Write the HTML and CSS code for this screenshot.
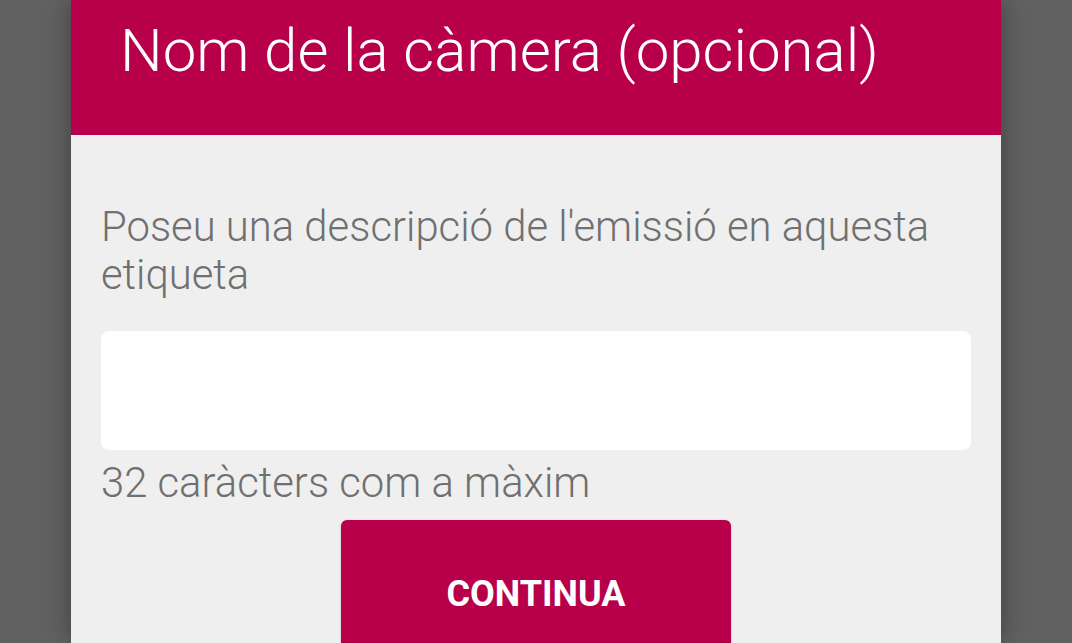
FILE: index.html
```html
<!DOCTYPE html>
<html lang="ca">
<head>
<meta charset="utf-8">
<title>Nom de la càmera</title>
<link rel="stylesheet" href="styles.css">
</head>
<body>
<div class="screen">
  <div class="dialog">
    <div class="header">
      <h1 class="title">Nom de la càmera (opcional)</h1>
    </div>
    <div class="content">
      <p class="desc">Poseu una descripció de l'emissió en aquesta etiqueta</p>
      <div class="input"></div>
      <p class="helper">32 caràcters com a màxim</p>
      <div class="actions">
        <button class="btn">CONTINUA</button>
      </div>
    </div>
  </div>
</div>
</body>
</html>
```
FILE: styles.css
```css
html, body {
  margin: 0;
  padding: 0;
  height: 100%;
  overflow: hidden;
}
body {
  background: #616161;
  font-family: Roboto, "Noto Sans", sans-serif;
}
.screen {
  display: flex;
  justify-content: center;
  height: 643px;
  padding-left: 1px;
}
.dialog {
  width: 930px;
  margin-left: -1px;
  background: #efefef;
  box-shadow: 0 0 24px rgba(0,0,0,0.35);
  display: flex;
  flex-direction: column;
}
.header {
  flex-shrink: 0;
  background: #b8004a;
  height: 135px;
  padding: 16px 0 0 49px;
  box-sizing: border-box;
}
.title {
  margin: 0;
  color: #ffffff;
  font-weight: 300;
  font-size: 60px;
  line-height: 70px;
}
.content {
  flex-shrink: 0;
  padding: 0 30px;
}
.desc {
  margin: 68px 0 0;
  color: #707070;
  font-size: 41.8px;
  line-height: 48px;
  font-weight: 300;
}
.input {
  margin-top: 32px;
  height: 119px;
  background: #ffffff;
  border-radius: 8px;
}
.helper {
  margin: 9px 0 0;
  color: #707070;
  font-size: 41.8px;
  line-height: 48px;
  font-weight: 300;
}
.actions {
  display: flex;
  justify-content: center;
  margin-top: 13px;
}
.btn {
  width: 390px;
  height: 150px;
  background: #b8004a;
  border: none;
  border-radius: 6px;
  color: #ffffff;
  font-family: Roboto, sans-serif;
  font-weight: 700;
  font-size: 36px;
  line-height: 42px;
  padding: 53px 0 0;
  display: flex;
  justify-content: center;
  align-items: flex-start;
  box-shadow: 0 1px 3px rgba(0,0,0,0.2);
}
```
